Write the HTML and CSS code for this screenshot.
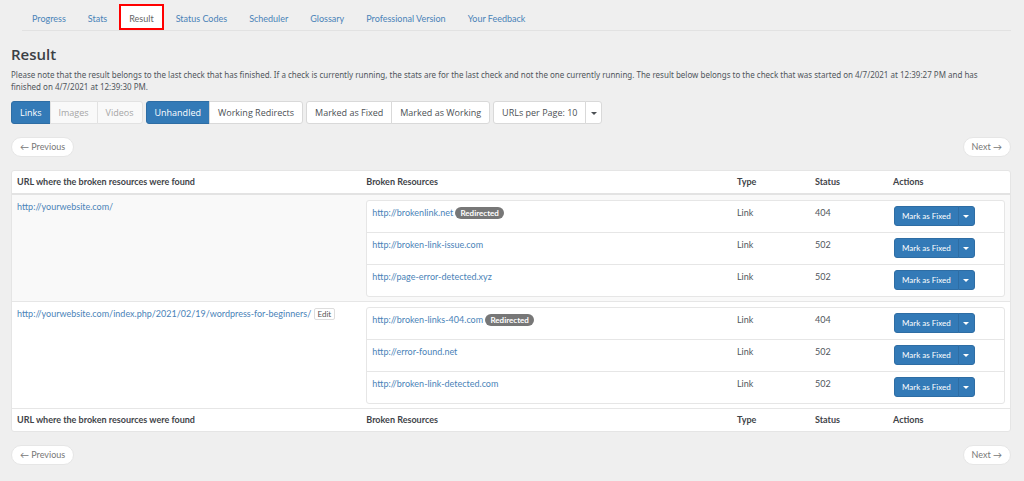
FILE: index.html
```html
<!DOCTYPE html>
<html lang="en">
<head>
  <meta charset="UTF-8" />
  <meta name="viewport" content="width=device-width, initial-scale=1" />
  <title>Result</title>
  <link rel="stylesheet" href="styles.css">
</head>
<body>
  <nav class="tabs">
    <a href="#">Progress</a>
    <a href="#">Stats</a>
    <a href="#" class="active">Result</a>
    <a href="#">Status Codes</a>
    <a href="#">Scheduler</a>
    <a href="#">Glossary</a>
    <a href="#">Professional Version</a>
    <a href="#">Your Feedback</a>
  </nav>

  <h1>Result</h1>
  <p class="note">Please note that the result belongs to the last check that has finished. If a check is currently running, the stats are for the last check and not the one currently running. The result below belongs to the check that was started on 4/7/2021 at 12:39:27 PM and has<br> finished on 4/7/2021 at 12:39:30 PM.</p>

  <div class="toolbar">
    <div class="btn-group">
      <button type="button" class="btn primary">Links</button>
      <button type="button" class="btn" disabled>Images</button>
      <button type="button" class="btn" disabled>Videos</button>
    </div>
    <div class="btn-group">
      <button type="button" class="btn primary">Unhandled</button>
      <button type="button" class="btn">Working Redirects</button>
    </div>
    <div class="btn-group">
      <button type="button" class="btn">Marked as Fixed</button>
      <button type="button" class="btn">Marked as Working</button>
    </div>
    <div class="btn-group">
      <button type="button" class="btn">URLs per Page: 10</button>
      <button type="button" class="btn toggle" aria-label="Choose URLs per page"><span class="caret"></span></button>
    </div>
  </div>

  <div class="pager">
    <a href="#">← Previous</a>
    <a href="#">Next →</a>
  </div>

  <table class="result">
    <colgroup>
      <col class="col-url"><col><col class="col-small"><col class="col-small"><col class="col-actions">
    </colgroup>
    <thead>
      <tr>
        <th>URL where the broken resources were found</th>
        <th>Broken Resources</th>
        <th>Type</th>
        <th>Status</th>
        <th>Actions</th>
      </tr>
    </thead>
    <tbody>
      <tr class="odd">
        <td><a href="#">http://yourwebsite.com/</a></td>
        <td colspan="4">
          <table class="resources">
            <tr>
              <td><a href="#">http://brokenlink.net</a> <span class="badge">Redirected</span></td>
              <td class="type">Link</td>
              <td class="status">404</td>
              <td class="actions"><div class="btn-group"><button type="button" class="btn small primary">Mark as Fixed</button><button type="button" class="btn small primary toggle" aria-label="More actions"><span class="caret"></span></button></div></td>
            </tr>
            <tr>
              <td><a href="#">http://broken-link-issue.com</a></td>
              <td class="type">Link</td>
              <td class="status">502</td>
              <td class="actions"><div class="btn-group"><button type="button" class="btn small primary">Mark as Fixed</button><button type="button" class="btn small primary toggle" aria-label="More actions"><span class="caret"></span></button></div></td>
            </tr>
            <tr>
              <td><a href="#">http://page-error-detected.xyz</a></td>
              <td class="type">Link</td>
              <td class="status">502</td>
              <td class="actions"><div class="btn-group"><button type="button" class="btn small primary">Mark as Fixed</button><button type="button" class="btn small primary toggle" aria-label="More actions"><span class="caret"></span></button></div></td>
            </tr>
          </table>
        </td>
      </tr>
      <tr>
        <td><a href="#">http://yourwebsite.com/index.php/2021/02/19/wordpress-for-beginners/</a> <button type="button" class="edit">Edit</button></td>
        <td colspan="4">
          <table class="resources">
            <tr>
              <td><a href="#">http://broken-links-404.com</a> <span class="badge">Redirected</span></td>
              <td class="type">Link</td>
              <td class="status">404</td>
              <td class="actions"><div class="btn-group"><button type="button" class="btn small primary">Mark as Fixed</button><button type="button" class="btn small primary toggle" aria-label="More actions"><span class="caret"></span></button></div></td>
            </tr>
            <tr>
              <td><a href="#">http://error-found.net</a></td>
              <td class="type">Link</td>
              <td class="status">502</td>
              <td class="actions"><div class="btn-group"><button type="button" class="btn small primary">Mark as Fixed</button><button type="button" class="btn small primary toggle" aria-label="More actions"><span class="caret"></span></button></div></td>
            </tr>
            <tr>
              <td><a href="#">http://broken-link-detected.com</a></td>
              <td class="type">Link</td>
              <td class="status">502</td>
              <td class="actions"><div class="btn-group"><button type="button" class="btn small primary">Mark as Fixed</button><button type="button" class="btn small primary toggle" aria-label="More actions"><span class="caret"></span></button></div></td>
            </tr>
          </table>
        </td>
      </tr>
    </tbody>
    <tfoot>
      <tr>
        <th>URL where the broken resources were found</th>
        <th>Broken Resources</th>
        <th>Type</th>
        <th>Status</th>
        <th>Actions</th>
      </tr>
    </tfoot>
  </table>

  <div class="pager">
    <a href="#">← Previous</a>
    <a href="#">Next →</a>
  </div>
</body>
</html>
```

FILE: styles.css
```css
* {
  box-sizing: border-box;
}
body {
  margin: 0;
  padding: 4px 13px 0 11px;
  background: #efefef;
  color: #50565c;
  font-family: Lato, "Open Sans", sans-serif;
  font-size: 9px;
  line-height: 12px;
}
a {
  color: #4a83b8;
  text-decoration: none;
}
.tabs {
  display: flex;
  height: 27px;
  margin-left: 11px;
  border-bottom: 1px solid #e2e2e2;
}
.tabs a {
  padding: 9px 10px 5px;
  margin-right: 2px;
}
.tabs a.active {
  padding: 7px 8px 3px;
  border: 2px solid #f00;
  background: #fff;
  color: #666;
}
h1 {
  margin: 13px 0 5px;
  color: #3b4045;
  font-family: "Open Sans", sans-serif;
  font-size: 15px;
  font-weight: 600;
  line-height: 20px;
}
.note {
  margin: 0 0 8px;
  font-family: "Noto Sans", "Open Sans", sans-serif;
  font-size: 8px;
}
.toolbar {
  display: flex;
  gap: 3px;
}
.btn-group {
  display: flex;
}
.btn {
  height: 23px;
  padding: 0 8px;
  border: 1px solid #d9d9d9;
  background: #fff;
  color: #4c5054;
  font-family: "Open Sans", sans-serif;
  font-size: 9px;
  line-height: 14px;
  cursor: pointer;
}
.btn + .btn {
  margin-left: -1px;
}
.btn:first-child {
  border-radius: 3px 0 0 3px;
}
.btn:last-child {
  border-radius: 0 3px 3px 0;
}
.btn:disabled {
  background: #f9f9f9;
  border-color: #e2e2e2;
  color: #a6a6a6;
  cursor: default;
}
.btn.primary {
  background: #337ab7;
  border-color: #2e6da4;
  color: #fff;
}
.btn.small {
  height: 20px;
  padding: 0 7px;
  font-family: inherit;
  font-size: 8px;
}
.btn.toggle {
  width: 17px;
  padding: 0;
}
.caret {
  display: block;
  width: 6px;
  margin: 1px auto 0;
  border-top: 3px solid;
  border-left: 3px solid transparent;
  border-right: 3px solid transparent;
}
.pager {
  display: flex;
  justify-content: space-between;
  margin: 13px 0;
}
.pager a {
  padding: 3px 8px;
  border: 1px solid #e6e6e6;
  border-radius: 10px;
  background: #fff;
  color: #777;
}
table {
  width: 100%;
  border-collapse: separate;
  border-spacing: 0;
  table-layout: fixed;
  background: #fff;
}
.result {
  border: 1px solid #e5e5e5;
  border-radius: 3px;
}
.col-url {
  width: 35%;
}
.col-small {
  width: 78px;
}
.col-actions {
  width: 122px;
}
th,
td {
  padding: 6px 5px 5px;
  text-align: left;
  vertical-align: top;
}
th {
  padding: 5px;
  color: #3f4449;
}
thead th {
  border-bottom: 2px solid #e3e3e3;
}
tbody .odd {
  background: #f9f9f9;
}
.result > tbody > tr + tr > td,
tfoot th {
  border-top: 1px solid #e6e6e6;
}
.result > tbody > tr > td[colspan] {
  padding: 5px 5px 4px;
}
.resources {
  border: 1px solid #e6e6e6;
  border-radius: 3px;
}
.resources tr + tr td {
  border-top: 1px solid #e6e6e6;
}
.resources .type,
.resources .status {
  width: 78px;
}
.resources .actions {
  width: 116px;
  padding: 5px 5px 6px 6px;
}
.badge {
  display: inline-block;
  padding: 0 5px;
  border-radius: 6px;
  background: #777;
  color: #fff;
  font-size: 8px;
  font-weight: 700;
}
.edit {
  padding: 0 3px;
  border: 1px solid #ddd;
  border-radius: 2px;
  background: #fff;
  color: #555;
  font-family: inherit;
  font-size: 8px;
  line-height: 10px;
}
```
